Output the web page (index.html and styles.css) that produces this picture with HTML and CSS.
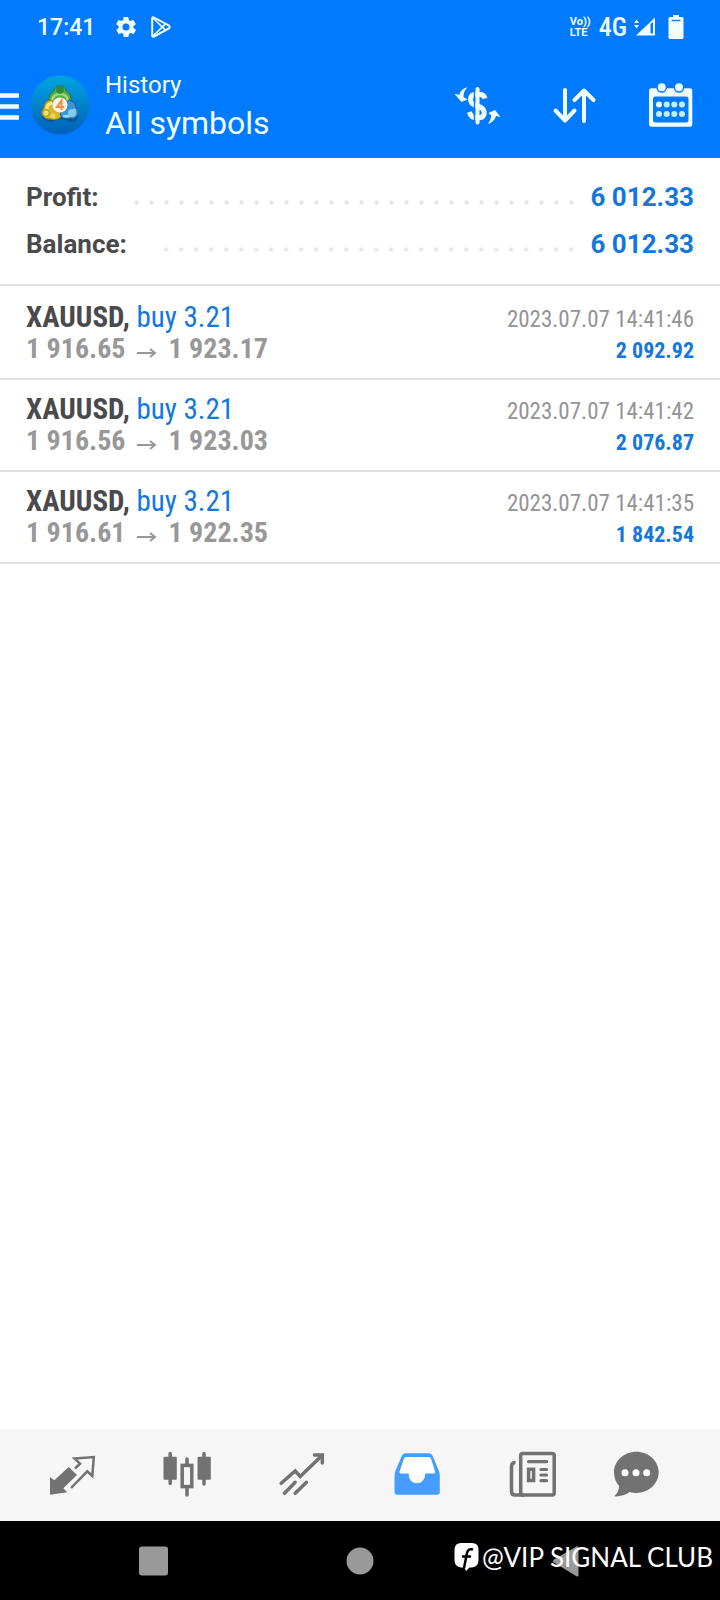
FILE: index.html
```html
<!DOCTYPE html>
<html lang="en">
<head>
<meta charset="utf-8">
<meta name="viewport" content="width=device-width, initial-scale=1">
<title>History</title>
<link rel="stylesheet" href="styles.css">
</head>
<body>
<div class="screen">
  <header class="header">
    <div class="status">
      <span class="clock">17:41</span>
      <svg class="gear" width="20" height="20" viewBox="2 2 20 20" aria-hidden="true"><path fill="currentColor" fill-rule="evenodd" d="M19.4 13a7.5 7.5 0 0 0 0-2l2.1-1.6a.5.5 0 0 0 .1-.6l-2-3.500a.5.5 0 0 0-.6-.2l-2.500 1a7.300 7.300 0 0 0-1.700-1l-.4-2.700a.5.5 0 0 0-.5-.4h-4a.5.5 0 0 0-.5.4L9.200 5.100a7.700 7.700 0 0 0-1.700 1L5 5.100a.5.5 0 0 0-.6.2l-2 3.500a.5.5 0 0 0 .1.600L4.600 11a8 8 0 0 0 0 2l-2.100 1.600a.5.5 0 0 0-.1.600l2 3.500c.1.200.4.300.6.200l2.500-1a7.300 7.300 0 0 0 1.700 1l.4 2.700c0 .2.200.4.500.4h4c.2 0 .5-.2.500-.4l.4-2.700a7.700 7.700 0 0 0 1.700-1l2.500 1c.2.100.5 0 .6-.2l2-3.500a.5.5 0 0 0-.1-.6zM12 15.500a3.500 3.500 0 1 1 0-7 3.500 3.500 0 0 1 0 7z"/></svg>
      <svg class="play" width="20" height="22" viewBox="0 0 20 22" fill="none" stroke="currentColor" stroke-width="2" stroke-linejoin="round" aria-hidden="true"><path d="M1.200 2.500Q1.200.5 3 1.500L18 9.700Q19.500 11 18 12.300L3 20.500Q1.200 21.500 1.200 19.500z"/><path stroke-width="1.700" d="M2 2l12.500 12.200M2 20L14.500 7.800"/></svg>
      <span class="spacer"></span>
      <span class="volte"><span>Vo))</span><span>LTE</span></span>
      <span class="network">4G</span>
      <svg class="signal" width="22" height="20" viewBox="0 0 22 20" fill="currentColor" aria-hidden="true"><path d="M0 6l2.500-3.500L5 6zM0 8h5l-2.500 3.500z"/><path fill-rule="evenodd" d="M2 18.500L21 .5v18zM16.500 7v9.500h2.500V5z"/></svg>
      <svg class="battery" width="16" height="24" viewBox="0 0 16 24" aria-hidden="true"><path fill="currentColor" d="M5 0h6v2h3q1.500 0 1.500 1.500v19q0 1.500-1.500 1.500H2Q.5 24 .5 22.500v-19Q.5 2 2 2h3z"/><path stroke="#1683ff" stroke-width="1.500" d="M3.500 5.500h9"/></svg>
    </div>
    <div class="toolbar">
      <button class="menu" type="button" aria-label="Menu"><svg width="19" height="30" viewBox="0 0 19 30" stroke="currentColor" stroke-width="4.500" aria-hidden="true"><path d="M0 5.500h19M0 16.500h19M0 27.500h19"/></svg></button>
      <svg class="logo" width="60" height="60" viewBox="0 0 60 60" aria-hidden="true">
        <defs>
          <linearGradient id="sky" x1="0" y1="0" x2="0" y2="1"><stop offset="0" stop-color="#00a5e2"/><stop offset=".5" stop-color="#0082cc"/><stop offset="1" stop-color="#0060b8"/></linearGradient>
        </defs>
        <circle cx="30" cy="30" r="29.500" fill="url(#sky)"/>
        <path d="M12 41q0 5 8 6l11-3 10 3q7-1 8-7L31 30z" fill="#07447c" opacity=".6"/>
        <path d="M30 11q5 0 6 5 6 3 5 11l-4 4H23l-4-4q-1-8 5-11 1-5 6-5z" fill="#55ae4a" stroke="#28752c"/>
        <path d="M22 26q1-7 8-7t8 7" fill="none" stroke="#a3d876" stroke-width="2.500"/>
        <circle cx="30" cy="15" r="3.800" fill="#2f8a3a"/>
        <path d="M21 25q-7 1-7 8-4 4-1 8t8 3q6 2 11-3l-3-10z" fill="#d6ba28" stroke="#8f8320"/>
        <path d="M17 34q0-5 5-6" fill="none" stroke="#f5eb83" stroke-width="3"/>
        <path d="M39 25q7 2 7 8 4 4 1 8t-7 2q-6 2-10-3l2-9z" fill="#3b94d4" stroke="#1c64a3"/>
        <path d="M33 41q9 2 12-7" fill="none" stroke="#93d4f0" stroke-width="2.500"/>
        <circle cx="16" cy="38" r="3.300" fill="#f1e37a" stroke="#a78d1c"/><circle cx="23" cy="41" r="2.500" fill="#eed65b"/><circle cx="42" cy="38" r="4" fill="#83cbee"/>
        <circle cx="30" cy="30" r="7.500" fill="#fff3e8"/>
        <path d="M31.500 35V25.500L27 32h7" fill="none" stroke="#f08c46" stroke-width="2"/>
      </svg>
      <h1 class="titles"><span class="overline">History</span><span class="title">All symbols</span></h1>
      <div class="actions">
        <button type="button" aria-label="Currency"><svg viewBox="0 0 48 48" fill="none" stroke="currentColor" aria-hidden="true"><path stroke-width="5" d="M32 17.500Q31 13 24.300 13t-6.800 5.500q0 4.500 6.800 6.500t7 6.500q0 5.500-7 5.500-6.300 0-8-6"/><path stroke="#007bff" stroke-width="1.500" d="M21.500 6v36"/><path stroke-width="4" stroke-linecap="round" d="M24.500 8v33.500"/><path fill="currentColor" stroke="none" d="M14.500 6.300Q10.500 10 10.500 16l4 2.500-6 2.500L1.500 13l4.800.8Q8 7.500 14.500 6.300zM35 43q3-4 3.300-8.500L35.500 32l6.500-3 5.500 7-4.500-1Q41 41 35 43z"/></svg></button>
        <button type="button" aria-label="Sort"><svg viewBox="0 0 48 48" fill="none" stroke="currentColor" stroke-width="4" stroke-linecap="round" stroke-linejoin="round" aria-hidden="true"><path d="M15 9v30.500M5.500 29.500l9.500 10 9.500-10M34 40V9.500M24.500 19L34 9.500l9.500 9.500"/></svg></button>
        <button type="button" aria-label="Period"><svg viewBox="0 0 48 48" aria-hidden="true"><path fill="currentColor" fill-rule="evenodd" d="M4.500 7.300h38.300q2.500 0 2.500 2.500v33.400q0 2.500-2.500 2.500H4.500Q2 45.700 2 43.200V9.800q0-2.500 2.500-2.500zM8.500 15.500q-2.500 0-2.500 2.500v21q0 2.500 2.500 2.500h30.500q2.500 0 2.500-2.500V18q0-2.500-2.500-2.500z"/><g fill="currentColor" stroke="#007bff" stroke-width="1.500"><circle cx="14.700" cy="6.300" r="4.700"/><circle cx="32" cy="6.300" r="4.700"/></g><g fill="#c4efff"><circle cx="12" cy="23.500" r="3" fill="#fff"/><circle cx="19.700" cy="23.500" r="3"/><circle cx="27.300" cy="23.500" r="3"/><circle cx="35" cy="23.500" r="3"/><circle cx="12" cy="33" r="3"/><circle cx="19.700" cy="33" r="3"/><circle cx="27.300" cy="33" r="3"/><circle cx="35" cy="33" r="3"/></g></svg></button>
      </div>
    </div>
  </header>

  <main class="content">
    <dl class="summary">
      <div class="total"><dt>Profit:</dt><dd>6 012.33</dd></div>
      <div class="total"><dt>Balance:</dt><dd>6 012.33</dd></div>
    </dl>
    <ul class="deals">
      <li class="deal">
        <div class="line"><span class="symbol"><b>XAUUSD,</b> <span class="side">buy 3.21</span></span><time class="time">2023.07.07 14:41:46</time></div>
        <div class="line"><span class="prices"><span>1 916.65</span><svg class="arrow" viewBox="0 0 20 10" aria-hidden="true"><path d="M0 5h17M13 1l5 4-5 4"/></svg><span>1 923.17</span></span><span class="gain">2 092.92</span></div>
      </li>
      <li class="deal">
        <div class="line"><span class="symbol"><b>XAUUSD,</b> <span class="side">buy 3.21</span></span><time class="time">2023.07.07 14:41:42</time></div>
        <div class="line"><span class="prices"><span>1 916.56</span><svg class="arrow" viewBox="0 0 20 10" aria-hidden="true"><path d="M0 5h17M13 1l5 4-5 4"/></svg><span>1 923.03</span></span><span class="gain">2 076.87</span></div>
      </li>
      <li class="deal">
        <div class="line"><span class="symbol"><b>XAUUSD,</b> <span class="side">buy 3.21</span></span><time class="time">2023.07.07 14:41:35</time></div>
        <div class="line"><span class="prices"><span>1 916.61</span><svg class="arrow" viewBox="0 0 20 10" aria-hidden="true"><path d="M0 5h17M13 1l5 4-5 4"/></svg><span>1 922.35</span></span><span class="gain">1 842.54</span></div>
      </li>
    </ul>
  </main>

  <nav class="tabs" aria-label="Sections">
    <button type="button" aria-label="Quotes"><svg viewBox="0 0 48 48" aria-hidden="true"><path fill="currentColor" d="M2 26l4.300 3.300L20.700 16l8.300 8-13.700 13.300 4 4L2 43.700z"/><path fill="none" stroke="currentColor" stroke-width="2.500" d="M27 17.500l5-4.800-5.500-5.200L45.800 6l-1.500 19-5-4.700L23 37"/></svg></button>
    <button type="button" aria-label="Charts"><svg viewBox="0 0 48 48" fill="currentColor" aria-hidden="true"><rect x=".5" y="5.700" width="13.300" height="23" rx="1"/><rect x="34.500" y="5.700" width="13.300" height="23" rx="1"/><path fill="none" stroke="currentColor" stroke-width="3.500" stroke-linecap="round" d="M7.200 2.500v30M41 2.500v30.500M24 8v6M24 37v7"/><rect x="19.200" y="14.400" width="9.600" height="21.200" fill="none" stroke="currentColor" stroke-width="3.500"/></svg></button>
    <button type="button" aria-label="Trade"><svg viewBox="0 0 48 48" fill="none" stroke="currentColor" stroke-width="3.500" stroke-linecap="round" aria-hidden="true"><path d="M3.200 32.300L17.200 20l5 5.500L44 4.500M6.500 42.300l10.700-11M17.200 42.300l11.300-11"/><path d="M36.500 4h7.800v8"/></svg></button>
    <button class="active" type="button" aria-label="History" aria-current="page"><svg viewBox="0 0 48 48" aria-hidden="true"><path fill="#fff" d="M12 5h25l6 18-11 9H16L6 23z"/><path fill="currentColor" fill-rule="evenodd" d="M12.500 2.300h23.500q2.500 0 3.500 2.500l6 14q1.300 3 1.300 6V41q0 2.700-2.700 2.700H4.200Q1.500 43.700 1.500 41V25q0-3 1.300-6l6-14.200q1-2.500 3.700-2.500zM13 6q-1.500 0-2 1.500L6.500 20.500q-.5 2 1.500 2h7.800v1.700a8.100 8.100 0 0 0 16.200 0v-1.700h8q2.500 0 2-2L38 7.500Q37.500 6 36 6z"/></svg></button>
    <button type="button" aria-label="News"><svg viewBox="0 0 48 48" fill="none" stroke="currentColor" stroke-width="3.500" aria-hidden="true"><rect x="12.700" y="2.400" width="33.500" height="41.600" rx="2"/><path d="M7.500 11.500q-4 0-4 4v25q0 3.500 3.500 3.500h9"/><path stroke-width="3.200" stroke-linecap="round" d="M20.500 10.700h18M33 18.500h5.500M33 24h5.500M33 29.700h5.500"/><rect x="20.600" y="18.300" width="5" height="11.200"/></svg></button>
    <button type="button" aria-label="Messages"><svg viewBox="0 0 48 48" aria-hidden="true"><path fill="currentColor" d="M24.300.7C36.700.7 46.700 9.900 46.700 21.300S36.700 42 24.300 42q-3.500 0-6.500-.9Q10 46 2.300 45.300 7 41 7 35 2 29 2 21.300C2 9.900 12 .7 24.300.7z"/><g fill="#fff"><circle cx="13" cy="21.700" r="3.500"/><circle cx="24" cy="21.700" r="3.500"/><circle cx="34.700" cy="21.700" r="3.500"/></g></svg></button>
  </nav>

  <footer class="system">
    <button type="button" aria-label="Recent apps"><svg width="30" height="32" viewBox="0 0 30 32" aria-hidden="true"><rect x="1" y="1.500" width="29" height="29" rx="3" fill="currentColor"/></svg></button>
    <button type="button" aria-label="Home"><svg width="30" height="32" viewBox="0 0 30 32" aria-hidden="true"><circle cx="15" cy="16" r="13.500" fill="currentColor"/></svg></button>
    <button type="button" aria-label="Back"><svg width="30" height="32" viewBox="0 0 30 32" aria-hidden="true"><path fill="currentColor" d="M2 14.500L24.500 1.500q2-1 2 1.500v27q0 2-2 1.200L2 17.500q-2-1.500 0-3z"/></svg></button>
    <div class="watermark">
      <svg width="25" height="28" viewBox="0 0 25 28" aria-hidden="true"><path fill="#fff" d="M7 0h11q6.500 0 6.500 7v10q0 7-6.500 7.500h-2.500L12 28l-1.500-3.500H7Q.5 24 .5 17V7Q.5 0 7 0z"/><path fill="none" stroke="#000" stroke-width="2.500" d="M19 6.500q-5-1.500-6 3.500l-3 15M8 13.500h9"/></svg>
      <span>@VIP SIGNAL CLUB</span>
    </div>
  </footer>
</div>
</body>
</html>
```
FILE: styles.css
```css
* {
  box-sizing: border-box;
}

body {
  margin: 0;
  background: #fff;
  font-family: Roboto, "Liberation Sans", sans-serif;
}

button {
  display: flex;
  align-items: center;
  justify-content: center;
  padding: 0;
  border: 0;
  background: none;
  color: inherit;
  cursor: pointer;
}

svg {
  display: block;
  flex: none;
}

.screen {
  display: flex;
  flex-direction: column;
  min-height: 100vh;
}

.header {
  background: #007bff;
  color: #f2fdff;
}

.status {
  display: flex;
  align-items: center;
  height: 54px;
  padding: 0 36px 0 37px;
}

.clock {
  font-size: 23px;
  font-weight: 500;
}

.gear {
  margin-left: 21px;
}

.play {
  margin-left: 15px;
}

.spacer {
  flex: 1;
}

.volte {
  display: flex;
  flex-direction: column;
  font-size: 11px;
  font-weight: 700;
  line-height: 11px;
}

.network {
  margin-left: 8px;
  font-family: "Roboto Condensed", "Liberation Sans Narrow", Roboto, sans-serif;
  font-size: 26px;
  font-weight: 500;
}

.signal {
  margin-left: 7px;
}

.battery {
  margin-left: 12px;
}

.toolbar {
  display: flex;
  align-items: center;
  height: 104px;
  padding: 0 25px 2px 0;
}

.logo {
  margin-left: 11px;
}

.titles {
  display: flex;
  flex-direction: column;
  margin: 0 0 0 15px;
  font-weight: 400;
}

.overline {
  font-size: 24px;
  line-height: 36px;
}

.title {
  font-size: 32px;
  line-height: 40px;
}

.actions {
  display: flex;
  gap: 49px;
  margin-left: auto;
}

.actions svg,
.tabs svg {
  width: 48px;
  height: 48px;
}

.content {
  flex: 1;
}

.summary {
  margin: 0;
  padding: 16px 26px;
  border-bottom: 2px solid #e1e1e1;
  font-size: 26px;
  font-weight: 700;
  line-height: 47px;
}

.total {
  display: flex;
  justify-content: space-between;
}

.total dt {
  color: #4a4a4c;
}

.total::before {
  content: "";
  flex: 1;
  order: 1;
  height: 5px;
  margin: 26px 12px 0 32px;
  background: radial-gradient(circle, #e4e4e6 1px, transparent 3px) right / 15px 5px repeat-x;
}

.total dd {
  order: 2;
  margin: 0;
  color: #1477dc;
}

.deals {
  margin: 0;
  padding: 2px 0 0;
  list-style: none;
  font-family: "Roboto Condensed", "Liberation Sans Narrow", Roboto, sans-serif;
}

.deal {
  padding: 13px 26px;
  border-bottom: 2px solid #e1e1e1;
}

.line {
  display: flex;
  align-items: baseline;
  justify-content: space-between;
  height: 32px;
  line-height: 32px;
}

.symbol {
  color: #4a4a4c;
  font-size: 29px;
}

.side {
  color: #1477dc;
}

.prices {
  display: flex;
  color: #989898;
  font-size: 28px;
  font-weight: 700;
}

.arrow {
  width: 20px;
  height: 10px;
  margin: 15px 12px 0 11px;
  fill: none;
  stroke: #989898;
  stroke-width: 2;
}

.time {
  color: #949494;
  font-size: 23px;
}

.gain {
  color: #1477dc;
  font-size: 22px;
  font-weight: 700;
}

.tabs {
  display: grid;
  grid-template-columns: repeat(5, 115fr) 94fr;
  height: 92px;
  padding: 0 37px 0 14px;
  background: #f6f6f6;
  color: #727272;
}

.tabs .active {
  color: #459eff;
}

.system {
  position: relative;
  display: grid;
  grid-template-columns: repeat(3, 1fr);
  height: 79px;
  padding: 0 50px;
  background: #000;
  color: #999;
}

.watermark {
  position: absolute;
  top: 18px;
  right: 7px;
  display: flex;
  align-items: center;
  gap: 3px;
  color: #fff;
  font-family: Lato, sans-serif;
  font-size: 26px;
  line-height: 36px;
}
```
